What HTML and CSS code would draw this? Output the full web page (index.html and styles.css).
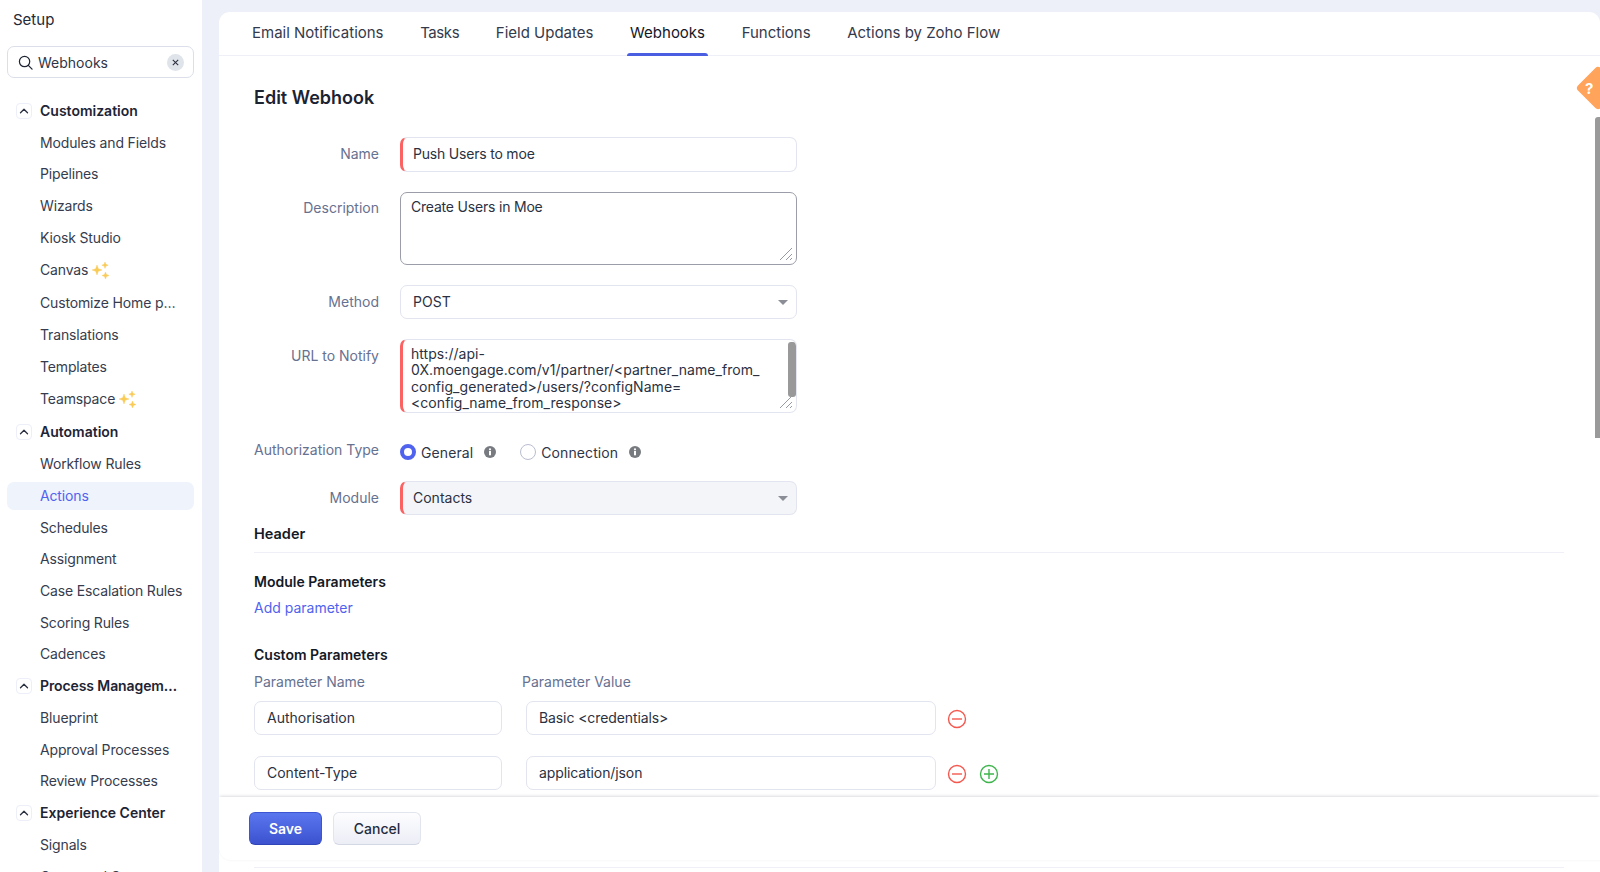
FILE: index.html
```html
<!DOCTYPE html>
<html lang="en">
<head>
<meta charset="utf-8">
<title>Edit Webhook</title>
<link rel="stylesheet" href="styles.css">
</head>
<body>
<svg class="defs" width="0" height="0" aria-hidden="true">
  <symbol id="chev" viewBox="0 0 16 16"><path d="M4 10 L8 6 L12 10" fill="none" stroke="#2a3040" stroke-width="1.5" stroke-linecap="round" stroke-linejoin="round"/></symbol>
  <symbol id="spark" viewBox="0 0 17 17"><path d="M5 3 L6.300 6.700 L10 8 L6.300 9.300 L5 13 L3.700 9.300 L0 8 L3.700 6.700Z M13 0 L13.900 2.300 L16.200 3.200 L13.900 4.100 L13 6.400 L12.100 4.100 L9.800 3.200 L12.100 2.300Z M13.500 10 L14.500 12.500 L17 13.500 L14.500 14.500 L13.500 17 L12.500 14.500 L10 13.500 L12.500 12.500Z" fill="#f9cb57" stroke="#f9cb57" stroke-width=".4" stroke-linejoin="round"/></symbol>
  <symbol id="grip" viewBox="0 0 14 14"><path d="M1 13 L13 1 M7 13 L13 7 M11 13 L13 11" stroke="#969aa3" stroke-width="1" fill="none"/></symbol>
  <symbol id="info" viewBox="0 0 12 12"><circle cx="6" cy="6" r="6" fill="#777b80"/><rect x="5" y="5" width="2" height="4.300" fill="#fff"/><circle cx="6" cy="3.300" r="1.100" fill="#fff"/></symbol>
  <symbol id="minus" viewBox="0 0 20 20"><circle cx="10" cy="10" r="8.500" fill="none" stroke="#f4594f" stroke-width="1.400"/><path d="M5 10 H15" stroke="#f4594f" stroke-width="1.400"/></symbol>
  <symbol id="plus" viewBox="0 0 20 20"><circle cx="10" cy="10" r="8.500" fill="none" stroke="#3fb54d" stroke-width="1.400"/><path d="M5 10 H15 M10 5 V15" stroke="#3fb54d" stroke-width="1.400"/></symbol>
</svg>
<div class="app">
  <aside class="side">
    <div class="side-title">Setup</div>
    <div class="search">
      <svg class="search-ico" viewBox="0 0 16 16"><circle cx="7" cy="7" r="5.500" fill="none" stroke="#1f2533" stroke-width="1.300"/><path d="M11 11 L15 15" stroke="#1f2533" stroke-width="1.300" stroke-linecap="round"/></svg>
      <span class="search-text">Webhooks</span>
      <span class="clear"><svg viewBox="0 0 10 10"><path d="M2 2 L8 8 M8 2 L2 8" stroke="#2a3040" stroke-width="1.200"/></svg></span>
    </div>
    <nav class="tree">
      <div class="group"><span class="chev"><svg><use href="#chev"/></svg></span><span class="group-name">Customization</span></div>
      <div class="item">Modules and Fields</div>
      <div class="item">Pipelines</div>
      <div class="item">Wizards</div>
      <div class="item">Kiosk Studio</div>
      <div class="item has-spark">Canvas <svg class="spark"><use href="#spark"/></svg></div>
      <div class="item"><span class="trunc">Customize Home page</span></div>
      <div class="item">Translations</div>
      <div class="item">Templates</div>
      <div class="item has-spark">Teamspace <svg class="spark"><use href="#spark"/></svg></div>
      <div class="group"><span class="chev"><svg><use href="#chev"/></svg></span><span class="group-name">Automation</span></div>
      <div class="item">Workflow Rules</div>
      <div class="item active">Actions</div>
      <div class="item">Schedules</div>
      <div class="item">Assignment</div>
      <div class="item">Case Escalation Rules</div>
      <div class="item">Scoring Rules</div>
      <div class="item">Cadences</div>
      <div class="group"><span class="chev"><svg><use href="#chev"/></svg></span><span class="group-name trunc trunc-group">Process Management</span></div>
      <div class="item">Blueprint</div>
      <div class="item">Approval Processes</div>
      <div class="item">Review Processes</div>
      <div class="group"><span class="chev"><svg><use href="#chev"/></svg></span><span class="group-name">Experience Center</span></div>
      <div class="item">Signals</div>
      <div class="item">Command Center</div>
    </nav>
  </aside>
  <div class="gutter">
    <main class="card">
      <div class="tabs">
        <span class="tab">Email Notifications</span>
        <span class="tab tab-tight">Tasks</span>
        <span class="tab">Field Updates</span>
        <span class="tab current">Webhooks</span>
        <span class="tab">Functions</span>
        <span class="tab">Actions by Zoho Flow</span>
      </div>
      <div class="content">
        <h1 class="page-title">Edit Webhook</h1>
        <div class="form">
          <div class="row">
            <label class="lab lab-mid">Name</label>
            <div class="box req box-name tight">Push Users to moe</div>
          </div>
          <div class="row">
            <label class="lab lab-top">Description</label>
            <div class="box area area-desc tight">Create Users in Moe<svg class="grip"><use href="#grip"/></svg></div>
          </div>
          <div class="row">
            <label class="lab lab-mid">Method</label>
            <div class="box select">POST<span class="caret"></span></div>
          </div>
          <div class="row">
            <label class="lab lab-url">URL to Notify</label>
            <div class="box area area-url req">https://api-<br>0X.moengage.com/v1/partner/&lt;partner_name_from_<br>config_generated&gt;/users/?configName=<br>&lt;config_name_from_response&gt;<span class="area-bar"></span><svg class="grip"><use href="#grip"/></svg></div>
          </div>
          <div class="row row-auth">
            <label class="lab lab-auth">Authorization Type</label>
            <div class="radios">
              <span class="radio on"></span><span class="radio-text">General</span><svg class="info"><use href="#info"/></svg>
              <span class="radio radio-second"></span><span class="radio-text">Connection</span><svg class="info"><use href="#info"/></svg>
            </div>
          </div>
          <div class="row">
            <label class="lab lab-mid">Module</label>
            <div class="box select req filled">Contacts<span class="caret"></span></div>
          </div>
        </div>
        <h2 class="sec-head">Header</h2>
        <h3 class="sub-head sub-module">Module Parameters</h3>
        <a class="add-link">Add parameter</a>
        <h3 class="sub-head sub-custom">Custom Parameters</h3>
        <div class="param-labels"><span class="param-lab">Parameter Name</span><span>Parameter Value</span></div>
        <div class="param-row">
          <div class="box pname">Authorisation</div>
          <div class="box pval">Basic &lt;credentials&gt;</div>
          <svg class="pico"><use href="#minus"/></svg>
        </div>
        <div class="param-row">
          <div class="box pname">Content-Type</div>
          <div class="box pval">application/json</div>
          <svg class="pico"><use href="#minus"/></svg>
          <svg class="pico"><use href="#plus"/></svg>
        </div>
        <div class="end-rule"></div>
      </div>
      <div class="footer">
        <button class="btn save">Save</button>
        <button class="btn cancel">Cancel</button>
      </div>
      <div class="help"><span class="help-q">?</span></div>
      <div class="scroll-thumb"></div>
    </main>
  </div>
</div>
</body>
</html>
```
FILE: styles.css
```css
* { box-sizing: border-box; }
html, body { margin: 0; height: 872px; overflow: hidden; }
body { font-family: Inter, "Noto Sans", "Liberation Sans", sans-serif; font-size: 14px; color: #2b3142; background: #fff; }
.defs { position: absolute; }
.app { display: flex; height: 872px; }

/* sidebar */
.side { width: 202px; flex: none; background: #fff; overflow: hidden; }
.side-title { height: 40px; padding: 8px 0 0 13px; font-size: 15px; line-height: 24px; color: #232938; }
.search { margin: 6px 8px 0 7px; height: 32px; border: 1px solid #dcdfe9; border-radius: 7px; display: flex; align-items: center; padding: 0 9px 0 10px; }
.search-ico { width: 15px; height: 15px; flex: none; }
.search-text { margin-left: 5px; flex: 1; color: #2f3547; }
.clear { width: 17px; height: 17px; border-radius: 50%; background: #dfe3ea; display: flex; align-items: center; justify-content: center; }
.clear svg { width: 9px; height: 9px; }
.tree { margin-top: 19px; }
.group, .item { height: 28px; margin: 0 8px 3.740px 7px; line-height: 28px; white-space: nowrap; }
.group { display: flex; align-items: center; padding-left: 9px; font-weight: 600; color: #1e2434; }
.chev { width: 16px; height: 16px; border: 1px solid #eceef8; border-radius: 4px; display: flex; align-items: center; justify-content: center; flex: none; }
.chev svg { width: 14px; height: 14px; }
.group-name { margin-left: 8px; }
.item { padding-left: 33px; color: #363c4e; letter-spacing: -.15px; }
.item.has-spark { margin-bottom: 5.740px; }
.item.active { background: #eff3fc; border-radius: 7px; color: #4f63ef; }
.trunc { display: block; width: 140px; overflow: hidden; text-overflow: ellipsis; }
.trunc-group { letter-spacing: -.1px; }
.spark { width: 17px; height: 17px; vertical-align: middle; }

/* main */
.gutter { flex: 1; min-width: 0; background: #eef0f9; padding: 12px 0 0 17px; }
.card { position: relative; height: 860px; background: #fff; border-radius: 11px 11px 0 0; overflow: hidden; }
.tabs { height: 44px; display: flex; gap: 36.600px; padding-left: 33px; border-bottom: 1px solid #eff0f7; }
.tab { position: relative; font-size: 15px; line-height: 42px; color: #343a4c; white-space: nowrap; }
.tab-tight { letter-spacing: -.4px; }
.tab.current { color: #12172a; }
.tab.current::after { content: ""; position: absolute; left: -3px; right: -3px; bottom: -1px; height: 3px; background: #4a5ee2; border-radius: 3px 3px 0 0; }
.content { padding: 27px 36px 0 35px; }
.page-title { margin: 0; font-size: 18px; line-height: 30px; font-weight: 600; color: #1c2333; }
.form { margin-top: 24px; display: flex; flex-direction: column; gap: 20px; }
.row { display: flex; align-items: flex-start; gap: 21px; }
.row-auth { height: 38px; margin-bottom: -10px; }
.lab { width: 125px; flex: none; text-align: right; color: #677190; white-space: nowrap; }
.lab-mid { line-height: 34px; }
.lab-top { line-height: 32px; }
.lab-url, .lab-auth { line-height: 34px; }
.box { position: relative; height: 34px; border: 1px solid #e2e4ef; border-radius: 7px; padding: 0 12px; line-height: 32px; color: #2b3142; background: #fff; white-space: nowrap; }
.form .box { width: 397px; }
.form .box-name { height: 35px; line-height: 32px; }
.tight { letter-spacing: -.2px; }
.req { border-left: 3px solid #fb6262; padding-left: 10px; }
.select { display: flex; justify-content: space-between; align-items: center; }
.filled { background: #f4f5f8; }
.caret { width: 0; height: 0; border-left: 5px solid transparent; border-right: 5px solid transparent; border-top: 5px solid #8b8e96; margin-right: -3.500px; }
.area { white-space: normal; padding: 0 0 0 10px; line-height: 16.400px; }
.area-desc { height: 73px; border-color: #9b9ea8; padding-top: 6px; }
.area-url { height: 74px; padding: 6px 0 0 8px; overflow: hidden; white-space: nowrap; letter-spacing: .05px; }
.area-bar { position: absolute; right: 0; top: 2px; width: 8px; height: 55px; background: #999; border-radius: 3px; }
.grip { position: absolute; right: 3px; bottom: 3px; width: 14px; height: 14px; }
.radios { display: flex; align-items: center; height: 38px; }
.radio { width: 16px; height: 16px; border-radius: 50%; border: 1px solid #b9bdd0; background: #fff; flex: none; }
.radio.on { border: 4px solid #4f63ef; }
.radio-second { margin-left: 24px; }
.radio-text { margin-left: 5px; color: #2f3547; letter-spacing: .1px; }
.info { width: 12px; height: 12px; margin-left: 11px; flex: none; }
.sec-head { margin: 9px 0 0; padding-bottom: 8px; border-bottom: 1px solid #eff0f7; font-size: 14.500px; line-height: 20px; font-weight: 600; color: #141926; }
.sub-head { margin: 0; font-size: 14px; line-height: 20px; font-weight: 600; color: #141926; }
.sub-module { margin-top: 19px; }
.sub-custom { margin-top: 27px; }
.add-link { display: block; margin-top: 6px; line-height: 20px; color: #4f63ef; }
.param-labels { display: flex; margin-top: 7px; line-height: 20px; color: #677190; }
.param-lab { width: 268px; }
.param-row { display: flex; align-items: center; margin-top: 21px; }
.param-labels + .param-row { margin-top: 9px; }
.pname { width: 248px; }
.pval { width: 410px; margin-left: 24px; letter-spacing: -.1px; }
.pico { width: 20px; height: 20px; margin-left: 11px; margin-top: 1px; flex: none; }
.pico + .pico { margin-left: 12px; }
.end-rule { margin-top: 77px; border-top: 1px solid #eff0f7; }
.footer { position: absolute; left: 0; right: 0; top: 785px; height: 63px; background: #fff; border-bottom-left-radius: 12px; box-shadow: 0 -2px 3px -1px rgba(30,35,60,.16), 0 1px 2px rgba(30,35,60,.03); padding: 15px 0 0 30px; display: flex; align-items: flex-start; gap: 11px; }
.btn { font-family: inherit; font-size: 14px; height: 33px; border-radius: 6px; padding: 0; cursor: pointer; }
.save { width: 73px; color: #fff; font-weight: 600; border: 1px solid #3d55d2; border-bottom-color: #2f45b8; background: linear-gradient(#5a76ef, #3c52cf); }
.cancel { width: 88px; color: #262c3d; font-weight: 500; border: 1px solid #e3e5ee; border-bottom-color: #d4d7e4; background: linear-gradient(#fdfdff, #eceef6); }
.help { position: absolute; left: 1357px; top: 54px; width: 44px; height: 44px; display: flex; align-items: center; padding-left: 9px; }
.help::before { content: ""; position: absolute; left: 6px; top: 6px; width: 32px; height: 32px; background: #ffa45a; border-radius: 4px; transform: rotate(45deg); }
.help-q { position: relative; color: #fff; font-weight: 700; font-size: 15px; }
.scroll-thumb { position: absolute; left: 1376px; top: 105px; width: 6px; height: 321px; background: #9a9a9a; border-radius: 3px 0 0 0; }
```
